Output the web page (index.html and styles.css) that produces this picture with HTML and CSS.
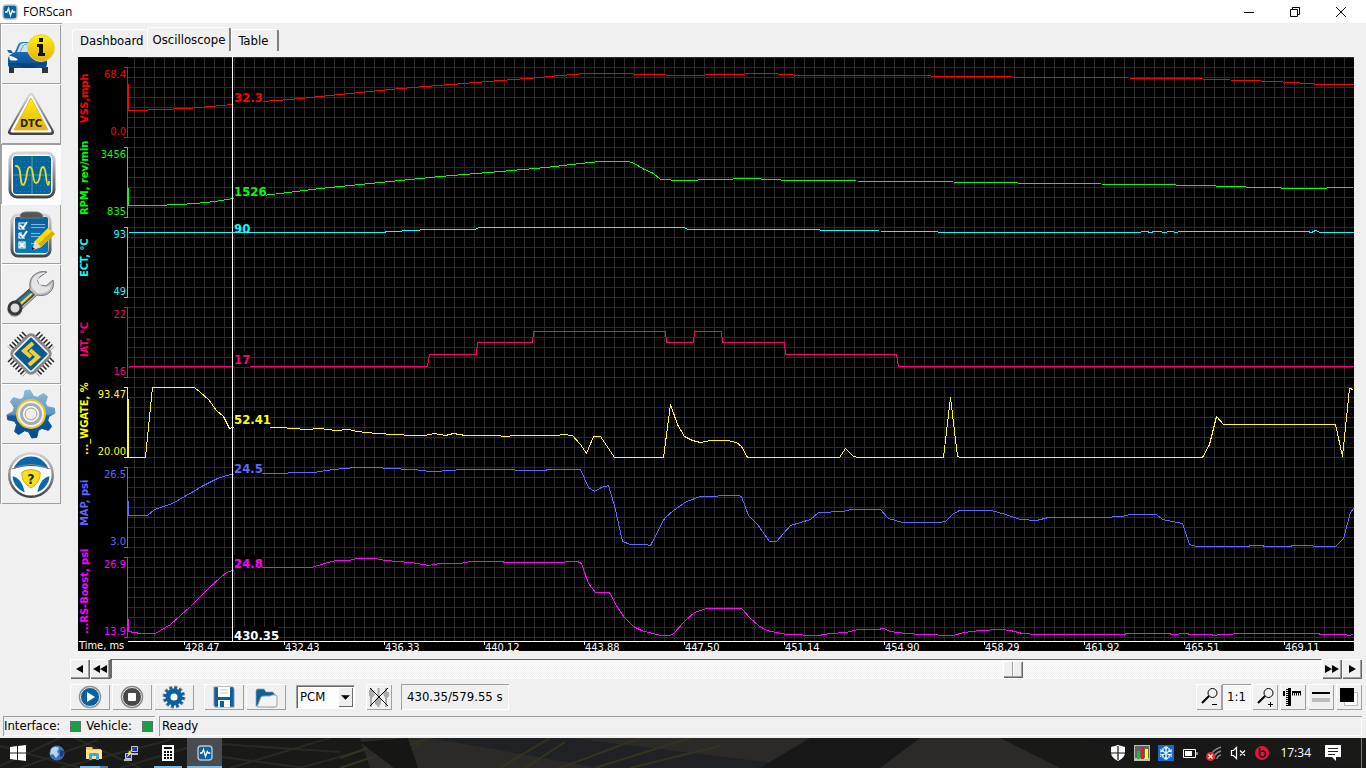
FILE: index.html
```html
<!DOCTYPE html>
<html lang="en">
<head>
<meta charset="utf-8">
<title>FORScan</title>
<link rel="stylesheet" href="styles.css">
</head>
<body>
<svg class="defs" width="0" height="0" aria-hidden="true">
  <defs>
    <linearGradient id="blue" x1="0" y1="0" x2="0" y2="1"><stop offset="0" stop-color="#0a5f9e"/><stop offset="1" stop-color="#0a7cb8"/></linearGradient>
    <linearGradient id="steel" x1="0" y1="0" x2="0" y2="1"><stop offset="0" stop-color="#d4d4d4"/><stop offset="1" stop-color="#444"/></linearGradient>
    <linearGradient id="gold" x1="0" y1="0" x2="0" y2="1"><stop offset="0" stop-color="#fff200"/><stop offset="1" stop-color="#e0b020"/></linearGradient>
    <linearGradient id="cog" x1="0" y1="0" x2="0" y2="1"><stop offset="0" stop-color="#8fb9da"/><stop offset=".5" stop-color="#5c97c4"/><stop offset=".55" stop-color="#13599b"/><stop offset="1" stop-color="#0a4c8c"/></linearGradient>
    <linearGradient id="car" x1="0" y1="0" x2="0" y2="1"><stop offset="0" stop-color="#2a7fc0"/><stop offset="1" stop-color="#064a8c"/></linearGradient>
    <pattern id="grid" x="134" y="57" width="10" height="10" patternUnits="userSpaceOnUse"><path d="M0 0H10V1H1V10H0Z" fill="#2c2c2c"/></pattern>
    <symbol id="logo" viewBox="0 0 16 16"><rect x="1" y="1" width="14" height="14" rx="3" fill="#0b629f" stroke="#b8c4cc" stroke-width="1.4"/><path d="M3 8h2l1.500-3.500 2 7 1.800-5 1 1.500h2" fill="none" stroke="#fff" stroke-width="1.300"/></symbol>
  </defs>
</svg>

<header class="titlebar">
  <svg class="app-logo" aria-hidden="true"><use href="#logo"/></svg>
  <h1 class="app-name">FORScan</h1>
  <div class="window-controls">
    <button type="button" aria-label="Minimize"><svg viewBox="0 0 10 10"><path d="M0 5.500h10" stroke="#000"/></svg></button>
    <button type="button" aria-label="Restore"><svg viewBox="0 0 10 10"><path d="M.5 2.500h7v7h-7zM2.500 2.500v-2h7v7h-2" fill="none" stroke="#000"/></svg></button>
    <button type="button" aria-label="Close"><svg viewBox="0 0 10 10"><path d="M0 0L10 10M10 0L0 10" stroke="#000"/></svg></button>
  </div>
</header>

<main class="workspace">
  <nav class="sidebar" aria-label="Sections">
    <button type="button" aria-label="Vehicle information">
      <svg viewBox="1 0 60 60">
        <path d="M9 43h5v6h-5zM42 43h6v6h-6z" fill="#30343a"/>
        <path d="M15 28l3-7q1-3 5-3h16q4 0 6 8l2 4v9q0 5-3 5H11q-3 0-3-4v-5q0-4 7-7z" fill="url(#car)"/>
        <path d="M17 28l3-7q1-2 4-2h10l1 9z" fill="#cfe2ef"/><path d="M20 28l3-6q1-2 4-2" fill="none" stroke="#5f9dc8"/><path d="M7 26h4l2 3h-4z" fill="#1b69a8"/>
        <path d="M9 32q5 0 9 4-4 1-8 0z" fill="#fff"/><path d="M9 40h37" stroke="#073b6c"/><path d="M20 41h18l-3 3H23z" fill="#084077"/>
        <circle cx="41" cy="24" r="13.500" fill="url(#gold)" stroke="#e6d45a"/><path d="M38 20h5v9h2v3h-7v-3h1v-6h-2v-3zM39 14h4v4h-4z" fill="#111"/>
      </svg></button>
    <button type="button" aria-label="DTC">
      <svg viewBox="1 0 60 60">
        <path d="M31 12L11 48h40z" fill="none" stroke="url(#steel)" stroke-width="6" stroke-linejoin="round"/>
        <path d="M31 13L12 47h38z" fill="#fff" stroke="#fff" stroke-width="3" stroke-linejoin="round"/>
        <path d="M31 14L14 46h34z" fill="url(#gold)" stroke="#e3b92a" stroke-width="1" stroke-linejoin="round"/>
        <text x="31" y="43" class="icon-text dtc">DTC</text>
      </svg></button>
    <button type="button" class="current" aria-label="Oscilloscope">
      <svg viewBox="1 0 60 60">
        <rect x="10" y="9" width="44" height="44" rx="7" fill="#fff" stroke="url(#steel)" stroke-width="3"/>
        <rect x="13" y="12" width="38" height="38" rx="3" fill="#066699"/>
        <path d="M16 17.500h33M16 23.500h33M16 35.500h33M16 41.500h33M16 47.500h33" stroke="#2689a0" stroke-dasharray="1 3"/>
        <path d="M13 31h38M32 12v38" stroke="#4b9b87" stroke-width="1.200"/>
        <path d="M15 22q4-1 5 6c1 8 1 13 3 13s3-5 4-12q1-6 3-6t3 8q1 8 3 8h0q3 0 4-8 1-8 3-8 2 0 3 9t2 9 1-4" fill="none" stroke="#e9dc3a" stroke-width="1.800"/>
      </svg></button>
    <button type="button" aria-label="Tests">
      <svg viewBox="1 0 60 60">
        <rect x="12" y="11" width="38" height="41" rx="6" fill="#fff" stroke="url(#steel)" stroke-width="3"/>
        <rect x="15" y="13" width="33" height="36" rx="2" fill="url(#blue)"/>
        <path d="M20 14q0-4 2-5 2-1 4-1h10q2 0 4 1 3 1 3 5z" fill="#555" stroke="#777"/>
        <g fill="none" stroke="#fff" stroke-width="1.200"><path d="M25 19h-6v6h6M19 29v5h6M19 29h3M19 38h6v6h-6z"/><path d="M20 21l3 3 4-6M20 30l3 3 4-6M20 39l4 4M24 39l-4 4" stroke-width="2"/></g>
        <path d="M31 20.500h14M31 23.500h14M31 29.500h9M31 32.500h9M31 39.500h3" stroke="#84b7d5"/>
        <path d="M48 24l7 6-14 13-8 3 1-8z" fill="#ffdd00"/><path d="M55 30L41 43l-3-3 14-13z" fill="#dcaa00"/><path d="M35 37l6 6-8 3z" fill="#ddd"/><path d="M32 43l3 2-3 1z"/>
      </svg></button>
    <button type="button" aria-label="Service">
      <svg viewBox="1 0 60 60">
        <path d="M47 8q-8-2-14 4-4 4-3 12L14 40q-7 1-6 7 2 6 8 5 5-1 5-6l16-15q8 2 13-3 5-5 3-12l-7 6-7-1-2-6z" fill="#b9bdc1" stroke="#777" stroke-width="1"/>
        <path d="M46 9q-7-1-12 4-4 5-2 11l5 5q8 1 12-3l3-6q-5 5-12 1-6-4 1-10z" fill="#e2e4e6"/>
        <path d="M29 25l6 6-17 15-7-6z" fill="#474b50"/><path d="M29 27l2 2-16 14-2-2z" fill="#1a7bb5"/><path d="M31 29l2 1-16 15-2-2z" fill="#f5dc1c"/>
        <circle cx="15" cy="44" r="6" fill="#ddd" stroke="#36393c" stroke-width="3"/>
      </svg></button>
    <button type="button" aria-label="Configuration and programming">
      <svg viewBox="1 0 60 60">
        <path d="M25 10L10 25M37 10L52 25M10 35L25 50M52 35L37 50" stroke="#222" stroke-width="7" stroke-dasharray="1.500 2"/>
        <rect x="16" y="15" width="30" height="30" rx="5" transform="rotate(45 31 30)" fill="#fff" stroke="#8a8a8a" stroke-width="3"/>
        <rect x="19" y="18" width="24" height="24" rx="1" transform="rotate(45 31 30)" fill="#085b91"/>
        <path d="M33 19L24 27L31 33M30 26L38 33L29 41" fill="none" stroke="#f2cf38" stroke-width="4"/>
      </svg></button>
    <button type="button" aria-label="Settings">
      <svg viewBox="1 0 60 60">
        <path d="M25 6.700L30 6 33.500 12.200 37.400 13.200 43.400 9.400 47.400 12.500 45.400 19.200 47.500 22.700 54.300 24.200 55 29.200 48.800 32.500 47.800 36.400 51.600 42.400 48.500 46.400 41.800 44.400 38.300 46.500 36.800 53.300 31.800 54 28.500 47.800 24.600 46.800 18.600 50.600 14.600 47.500 16.600 40.800 14.500 37.300 7.700 35.800 7 30.800 13.200 27.500 14.200 23.600 10.400 17.600 13.500 13.600 20.200 15.600 23.700 13.500z" fill="url(#cog)" stroke="url(#cog)" stroke-linejoin="round"/>
        <circle cx="31" cy="30" r="14" fill="#eef0f0" stroke="#e4c62a" stroke-width="2"/><circle cx="31" cy="30" r="11" fill="#aaa"/><circle cx="31" cy="30" r="7" fill="#eee" stroke="#fff" stroke-width="2"/><circle cx="31" cy="30" r="6" fill="#efefef" stroke="#999"/>
      </svg></button>
    <button type="button" aria-label="Help">
      <svg viewBox="1 0 60 60">
        <circle cx="31" cy="31" r="21.500" fill="#0d68a8" stroke="url(#steel)" stroke-width="3"/><circle cx="31" cy="31" r="19.500" fill="none" stroke="#fff" stroke-width="2"/>
        <path d="M11 26q20-8 40 0v6q-11 1-14 18H25Q22 33 11 32z" fill="#fff"/>
        <path d="M12 25q19-9 38 0" fill="none" stroke="#888"/>
        <path d="M22 28q9-5 18 0 1 8-5 13l-4 3-4-3q-6-5-5-13z" fill="#f6df1c" stroke="#cda91a"/>
        <text x="31" y="40" class="icon-text question">?</text>
      </svg></button>
  </nav>

  <section class="content">
    <div class="tabs" role="tablist">
      <button type="button" role="tab" aria-selected="false">Dashboard</button>
      <button type="button" role="tab" aria-selected="true">Oscilloscope</button>
      <button type="button" role="tab" aria-selected="false">Table</button>
    </div>

    <div class="chart">
      <svg viewBox="78 57 1276 594" role="img" aria-label="Oscilloscope traces">
        <rect x="128" y="57" width="1226" height="584" fill="url(#grid)"/>
        <g class="traces" transform="translate(.5 .5)">
          <g class="vss"><path d="M123 67h4v70h-4M128 83V110"/><path d="M128 110L137 110 158 109 187 108 210 106 232 104 262 101 290 99 340 94 370 91 400 88 450 84 500 80 540 77 560 75 585 73 625 73 640 74 690 75 720 74 770 73 800 75 900 75 960 76 1060 77 1195 78 1209 79 1250 80 1293 82 1320 84 1353 84"/></g>
          <g class="rpm"><path d="M123 147h4v70h-4M128 187V205"/><path d="M128 205L154 205 180 204 194 203 215 201 232 198 271 194 320 188 370 183 400 180 440 176 500 171 545 167 580 163 600 161 628 161 634 163 642 168 653 173 660 179 680 180 750 178 790 180 920 181 1050 183 1150 184 1200 185 1260 187 1300 188 1353 187"/></g>
          <g class="ect"><path d="M123 227h4v70h-4"/><path d="M128 232H384L386 231 418 230 421 229H475L478 227H684L687 229H818L821 230 936 231 939 232H1139L1142 231 1146 231 1150 232 1154 231 1158 231 1164 232 1170 231 1176 232 1179 231H1307L1311 232 1315 230 1320 232H1353"/></g>
          <g class="iat"><path d="M123 307h4v70h-4"/><path d="M128 366H427L429 354H476L477 342H532L533 331H665L666 342H693L694 331H721L722 342H784L785 354H896L898 366H1353"/></g>
          <g class="wgate"><path d="M123 387h4v70h-4M128 398V457"/><path d="M128 457L145 457 152 387 194 387 200 392 208 399 216 410 223 416 229 428 232 427 280 427 306 429 320 428 335 430 349 429 356 431 376 433 413 435 424 435 434 433 445 435 453 433 465 435 495 435 505 436 515 435 557 435 562 434 572 435 580 444 586 453 593 436 600 436 614 457 663 457 670 404 677 424 684 436 692 440 700 442 710 440 727 440 736 442 741 446 747 457 839 457 845 448 853 456 858 457 943 457 950 397 957 456 960 457 1202 457 1209 444 1216 416 1223 424 1335 424 1342 456 1349 388 1353 389"/></g>
          <g class="map"><path d="M123 467h4v80h-4M128 500V515"/><path d="M128 515L147 515 154 509 172 503 186 495 203 485 217 478 226 475 232 474 263 473 313 472 333 469 355 467 378 467 387 468 413 469 430 471 453 470 458 469 514 469 515 470 545 470 547 469 580 469 588 487 594 491 601 487 608 485 614 505 622 541 630 544 645 544 650 545 664 518 673 510 686 501 700 496 717 496 718 495 738 495 741 496 748 515 757 524 769 541 776 541 790 525 810 519 818 512 843 511 850 509 880 509 888 518 902 522 939 522 945 521 952 514 959 510 991 510 1005 514 1020 519 1036 520 1048 517 1103 517 1121 516 1130 514 1156 514 1162 519 1182 523 1189 544 1196 546 1248 546 1250 545 1262 545 1264 546 1290 546 1292 545 1312 545 1313 546 1335 546 1343 538 1350 512 1353 508"/></g>
          <g class="boost"><path d="M123 557h4v80h-4M128 618V631"/><path d="M128 631L140 633 155 633 170 624 190 606 208 588 220 577 226 572 232 570 263 567 311 567 324 563 335 560 349 560 356 558 375 558 385 560 410 562 428 565 440 563 460 563 470 561 502 561 504 562 563 562 566 561 577 561 581 563 588 583 595 592 609 592 617 607 624 617 633 626 641 630 660 635 670 635 673 633 684 621 694 612 706 608 741 608 750 618 758 625 766 630 776 632 786 634 818 635 830 633 845 632 858 629 877 629 883 628 890 631 905 633 922 634 953 635 963 632 980 630 1000 629 1010 630 1022 633 1036 634 1124 634 1126 633 1169 633 1171 634 1187 633 1189 634 1211 634 1213 635 1220 634 1245 633 1318 633 1320 634 1345 634 1348 635 1353 634"/></g>
        </g>
        <g class="masks"><path d="M234 90h29v16h-29zM234 183h32v16h-32zM234 220h16v12h-16zM234 351h16v16h-16zM234 411h36v17h-36zM234 460h28v16h-28zM234 555h28v16h-28zM234 627h44v14h-44z"/></g>
        <path d="M232 57h1v584h-1zM128 641h1226v1H128zM184 641h1v4h-1zM284 641h1v4h-1zM384 641h1v4h-1zM484 641h1v4h-1zM584 641h1v4h-1zM684 641h1v4h-1zM784 641h1v4h-1zM884 641h1v4h-1zM984 641h1v4h-1zM1084 641h1v4h-1zM1184 641h1v4h-1zM1284 641h1v4h-1z" fill="#fff" shape-rendering="crispEdges"/>
        <g class="scale-text">
          <g class="vss"><text x="126" y="78">68.4</text><text x="126" y="135">0.0</text></g>
          <g class="rpm"><text x="126" y="158">3456</text><text x="126" y="215">835</text></g>
          <g class="ect"><text x="126" y="238">93</text><text x="126" y="295">49</text></g>
          <g class="iat"><text x="126" y="318">22</text><text x="126" y="375">16</text></g>
          <g class="wgate"><text x="126" y="398">93.47</text><text x="126" y="455">20.00</text></g>
          <g class="map"><text x="126" y="478">26.5</text><text x="126" y="545">3.0</text></g>
          <g class="boost"><text x="126" y="568">26.9</text><text x="126" y="635">13.9</text></g>
        </g>
        <g class="names">
          <text class="vss" transform="translate(88 123) rotate(-90)">VSS,mph</text>
          <text class="rpm" transform="translate(88 215) rotate(-90)">RPM, rev/min</text>
          <text class="ect" transform="translate(88 277) rotate(-90)">ECT, °C</text>
          <text class="iat" transform="translate(88 357) rotate(-90)">IAT, °C</text>
          <text class="wgate" transform="translate(88 455) rotate(-90)">..._WGATE, %</text>
          <text class="map" transform="translate(88 526) rotate(-90)">MAP, psi</text>
          <text class="boost" transform="translate(88 634) rotate(-90)">...RS-Boost, psi</text>
        </g>
        <g class="readings">
          <text class="vss" x="234" y="102">32.3</text><text class="rpm" x="234" y="196">1526</text><text class="ect" x="234" y="233">90</text><text class="iat" x="234" y="364">17</text>
          <text class="wgate" x="234" y="424">52.41</text><text class="map" x="234" y="473">24.5</text><text class="boost" x="234" y="568">24.8</text><text class="time" x="234" y="640">430.35</text>
        </g>
        <g class="time-text">
          <text x="79" y="649">Time, ms</text><text x="185" y="651">428.47</text><text x="285" y="651">432.43</text><text x="385" y="651">436.33</text><text x="485" y="651">440.12</text><text x="585" y="651">443.88</text><text x="685" y="651">447.50</text><text x="785" y="651">451.14</text><text x="885" y="651">454.90</text><text x="985" y="651">458.29</text><text x="1085" y="651">461.92</text><text x="1185" y="651">465.51</text><text x="1285" y="651">469.11</text>
        </g>
      </svg>
    </div>

    <div class="scroller">
      <button type="button" aria-label="Step back"><svg viewBox="0 0 16 8"><path d="M11 0v8L4 4z"/></svg></button>
      <button type="button" aria-label="Page back"><svg viewBox="0 0 16 8"><path d="M8 0v8L1 4zM15 0v8L8 4z"/></svg></button>
      <input type="range" min="0" max="1000" value="749" aria-label="Time position">
      <button type="button" aria-label="Page forward"><svg viewBox="0 0 16 8"><path d="M1 0v8l7-4zM8 0v8l7-4z"/></svg></button>
      <button type="button" aria-label="Step forward"><svg viewBox="0 0 16 8"><path d="M5 0v8l7-4z"/></svg></button>
    </div>

    <div class="toolbar">
      <div class="tool-group">
        <button type="button" class="tool wide" aria-label="Play"><svg viewBox="0 0 24 24"><circle cx="12" cy="12" r="10.500" fill="#0b609e" stroke="#8b9299" stroke-width="1.500"/><circle cx="12" cy="12" r="9.500" fill="none" stroke="#dfe8ee"/><path d="M9 7l8 5-8 5z" fill="#fff"/></svg></button>
        <button type="button" class="tool wide" aria-label="Stop"><svg viewBox="0 0 24 24"><circle cx="12" cy="12" r="10.500" fill="#484848" stroke="#888" stroke-width="1.500"/><circle cx="12" cy="12" r="9.500" fill="none" stroke="#e4e4e4"/><rect x="8" y="8" width="8" height="8" rx="1" fill="#fff"/></svg></button>
        <button type="button" class="tool wide" aria-label="Options"><svg viewBox="0 0 24 24"><circle cx="12" cy="12" r="9.500" fill="none" stroke="#8d969e" stroke-width="4" stroke-dasharray="3 1.975"/><circle cx="12" cy="12" r="8.500" fill="none" stroke="#0b609e" stroke-width="4" stroke-dasharray="2.450 2"/><circle cx="12" cy="12" r="6" fill="#fff" stroke="#0b609e" stroke-width="5"/></svg></button>
      </div>
      <div class="tool-group files">
        <button type="button" class="tool wide" aria-label="Save"><svg viewBox="0 0 24 24"><path d="M2 2h19l1 2v18H3l-1-2z" fill="#0b609e" stroke="#8b9299"/><path d="M6 2h12v10H6z" fill="#fff"/><path d="M8 5h8M8 8h8" stroke="#c5ccd1"/><path d="M6 15h12v7H6z" fill="#fff"/><path d="M8 16h4v6H8z" fill="#0b609e"/></svg></button>
        <button type="button" class="tool wide" aria-label="Open"><svg viewBox="0 0 24 24"><path d="M2 21V6q0-2 2-2h6l2 3h7l2 3v12z" fill="#0b609e" stroke="#98a1a8" stroke-width=".700"/><path d="M3 22l4-10q1-1 3-1h6l2-1h4l1 1v9q0 2-2 2z" fill="#f4f4f4" stroke="#9ba1a6"/></svg></button>
      </div>
      <div class="module">
        <select aria-label="Module"><option>PCM</option></select>
        <span class="module-arrow" aria-hidden="true"><svg viewBox="0 0 10 5"><path d="M0 0h10L5 5z"/></svg></span>
      </div>
      <button type="button" class="tool signals" aria-label="Clear traces"><svg viewBox="0 0 22 22"><path d="M3 2v7M10.500 2v8M18 2v8M3 9v12M10.500 14v7M18 9v12" stroke="#aaa" stroke-width="2"/><path d="M1 4h4l2 5-3 3-3-2zM10 10l3 4v4l-3 2-3-2v-3zM15 6h6v4l-3 3-2-3z" fill="#aaa"/><path d="M2 2l18 18M20 2L2 20" stroke="#000"/></svg></button>
      <output class="position">430.35/579.55 s</output>
      <div class="tool-group view">
        <button type="button" class="tool" aria-label="Zoom out"><svg viewBox="0 0 22 22"><circle cx="14.500" cy="7" r="4.500" fill="none" stroke="#000"/><path d="M11 10l-7 7" stroke="#000" stroke-width="2"/><path d="M14 18.500h5" stroke="#000"/></svg></button>
        <button type="button" class="tool ratio" aria-pressed="true">1:1</button>
        <button type="button" class="tool" aria-label="Zoom in"><svg viewBox="0 0 22 22"><circle cx="14.500" cy="7" r="4.500" fill="none" stroke="#000"/><path d="M11 10l-7 7" stroke="#000" stroke-width="2"/><path d="M14 18.500h5M16.500 16v5" stroke="#000"/></svg></button>
        <button type="button" class="tool" aria-label="Rulers"><svg viewBox="0 0 22 22"><path d="M6 2h3v18H6zM1 5h2v5H1z"/><path d="M5 3v17" stroke="#000" stroke-width="2" stroke-dasharray="1 1"/><path d="M10 6h9" stroke="#000" stroke-width="2"/><path d="M10 7.500h10" stroke="#000" stroke-width="4" stroke-dasharray="1 1"/></svg></button>
        <button type="button" class="tool" aria-label="Line width"><svg viewBox="0 0 22 22"><path d="M2 6h18v2H2z"/><path d="M2 12h18v4H2z" fill="#bbb"/></svg></button>
        <button type="button" class="tool" aria-label="Background colour"><svg viewBox="0 0 22 22"><path d="M6.500 6.500h13v13h-13z" fill="#fff" stroke="#bbb"/><path d="M2 2h14v14H2z"/></svg></button>
      </div>
    </div>
  </section>
</main>

<footer class="statusbar">
  <div class="panel links"><span>Interface:</span><i class="lamp"></i><span>Vehicle:</span><i class="lamp"></i></div>
  <div class="panel state">Ready</div>
</footer>

<div class="taskbar">
  <svg class="wallpaper" viewBox="0 0 1366 30" preserveAspectRatio="none" aria-hidden="true">
    <path d="M0 0h1366v30H0z" fill="#191a18"/><path d="M360 0h640l60 30H370z" fill="#2c2a29"/><path d="M430 0h140l180 22 60 8H600z" fill="#202124"/><path d="M810 0h110l-40 30H760z" fill="#171717"/><path d="M1080 0h90l110 18 86 12h-180z" fill="#171717"/>
    <path d="M0 28L60 0M20 30L98 2M60 30L170 2M120 30L220 0M0 8L80 30M75 0l65 30M215 18l90 12M220 6l120 8M230 30L330 0M300 30L400 2" stroke="#272923" stroke-width="2"/>
    <path d="M340 20L395 0M340 30L430 0M385 30L420 6M500 30L550 0M525 30L565 4M560 30L640 0M595 30L690 0M630 30L720 8" stroke="#33331f" stroke-width="2"/>
    <path d="M360 4l34 26h24L408 0z" fill="#161615"/>
  </svg>
  <nav class="apps" aria-label="Taskbar">
    <button type="button" class="start" aria-label="Start"><svg viewBox="0 0 16 16"><path d="M0 2l7-1v6.500H0zM8 1l8-1v7.500H8zM0 8.500h7V15l-7-1zM8 8.500h8V16l-8-1z" fill="#fff"/></svg></button>
    <button type="button" aria-label="Browser"><svg viewBox="0 0 16 16"><circle cx="8" cy="8" r="7.500" fill="#3c70ba"/><path d="M2 4q4-4 8-1l-2 4 2 2-3 4-3-4-3 1z" fill="#b9d2ef"/><path d="M11 5l4 1-1 5-3 1z" fill="#1c3f81"/></svg></button>
    <button type="button" class="running stacked" aria-label="File Explorer"><svg viewBox="0 0 16 16"><path d="M0 2h6l1 2h8v10H0z" fill="#f5c951"/><path d="M0 5h16v9H0z" fill="#ffe391"/><path d="M3 15V10q0-2 2-2h6q2 0 2 2v5h-3v-4H6v4z" fill="#3ba8e0"/></svg></button>
    <button type="button" aria-label="PuTTY"><svg viewBox="0 0 16 16"><path d="M8.500 1.500h6v5h-6zM2.500 8.500h6v5h-6z" fill="#2328d0" stroke="#ccc"/><path d="M7 8h8v2H9zM1 14h8v2H1z" fill="#bbb"/><path d="M12 3L7 7l2 1-6 5 3-5-1-1z" fill="#ff0"/></svg></button>
    <button type="button" class="running" aria-label="Calculator"><svg viewBox="0 0 16 16"><path d="M2 0h12v16H2z" fill="#fff"/><path d="M4 2h8v2H4zM4 6h2v2H4zM7 6h2v2H7zM10 6h2v2h-2zM4 9h2v2H4zM7 9h2v2H7zM10 9h2v2h-2zM4 12h2v2H4zM7 12h2v2H7zM10 12h2v2h-2z" fill="#111"/></svg></button>
    <button type="button" class="running active" aria-label="FORScan"><svg viewBox="0 0 16 16"><use href="#logo"/></svg></button>
  </nav>
  <div class="tray">
    <button type="button" aria-label="Security"><svg viewBox="0 0 16 16"><path d="M8 0l7 2v5q0 6-7 9-7-3-7-9V2z" fill="#fff"/><path d="M8 1v14M1 8h14" stroke="#151515" stroke-width="1.200"/></svg></button>
    <button type="button" aria-label="Monitor"><svg viewBox="0 0 16 16"><path d="M0 0h16v16H0z" fill="#bfc1b5"/><path d="M1 1h14v12H1z" fill="#65675f"/><path d="M3 6h3v8H3z" fill="#0c3"/><path d="M7 2h3v12H7z" fill="#f01818"/><path d="M11 4h3v10h-3z" fill="#ff2"/></svg></button>
    <button type="button" aria-label="Temperature"><svg viewBox="0 0 16 16"><path d="M0 0h16v16H0z" fill="#1768c8"/><path d="M8 1v14M2 4.500l12 7M14 4.500l-12 7M6 2l2 2 2-2M6 14l2-2 2 2M2 7l3-1V3M14 7l-3-1V3M2 9l3 1v3M14 9l-3 1v3" fill="none" stroke="#e3f6ff" stroke-width="1.300"/></svg></button>
    <button type="button" aria-label="Battery"><svg viewBox="0 0 16 16"><path d="M1.500 4.500h12v8h-12zM15 7v3" fill="none" stroke="#fff"/><path d="M3 6h7v5H3z" fill="#fff"/></svg></button>
    <button type="button" aria-label="Network"><svg viewBox="0 0 16 16"><path d="M5 13q0-8 10-11M8 14q0-6 7-8M11 14q0-3 4-4" fill="none" stroke="#888" stroke-width="1.400"/><circle cx="4.500" cy="11.500" r="4.500" fill="#e32828"/><path d="M2.500 9.500l4 4M6.500 9.500l-4 4" stroke="#fff" stroke-width="1.300"/></svg></button>
    <button type="button" aria-label="Volume muted"><svg viewBox="0 0 16 16"><path d="M1.500 5.500h2l3-3v11l-3-3h-2zM10 5.500l5 5M15 5.500l-5 5" fill="none" stroke="#fff" stroke-width="1.200"/></svg></button>
    <button type="button" aria-label="Audio"><svg viewBox="0 0 16 16"><circle cx="8" cy="8" r="7" fill="#df173c"/><circle cx="8.500" cy="9" r="3" fill="none" stroke="#2b1218" stroke-width="1.600"/><path d="M5.500 3v6" stroke="#2b1218" stroke-width="1.600"/></svg></button>
    <time class="clock" datetime="17:34">17:34</time>
    <button type="button" class="notices" aria-label="Notifications"><svg viewBox="0 0 16 16"><path d="M0 0h16v12h-5v4l-4-4H0z" fill="#fff"/><path d="M3 3.500h10M3 6.500h10M3 9.500h7" stroke="#222"/></svg></button>
  </div>
</div>
</body>
</html>
```
FILE: styles.css
```css
* { box-sizing: border-box; }

body {
  margin: 0;
  height: 100vh;
  display: flex;
  flex-direction: column;
  overflow: hidden;
  background: #f0f0f0;
  color: #000;
  font: 12px/16px "DejaVu Sans Condensed", "DejaVu Sans", sans-serif;
}

button, select, input, output { font: inherit; color: inherit; }
button { border: 0; padding: 0; background: none; }
svg { display: block; }
.defs { position: absolute; }

/* Title bar */
.titlebar { display: flex; align-items: center; height: 23px; flex: none; background: #fff; padding-left: 2px; }
.app-logo { width: 16px; height: 16px; }
.app-name { margin: 0 auto 0 5px; font: 12px/16px "Open Sans", "Noto Sans", sans-serif; }
.window-controls { display: flex; }
.window-controls button { width: 46px; height: 20px; display: grid; place-items: center; }
.window-controls svg { width: 10px; height: 10px; }
.window-controls button:last-child { margin-right: 2px; }

/* Work area */
.workspace { flex: 1; min-height: 0; display: flex; }
.sidebar { width: 62px; flex: none; align-self: flex-start; border-top: 1px solid #a0a0a0; border-left: 1px solid #a0a0a0; }
.sidebar button { display: block; width: 60px; height: 60px; box-shadow: inset 1px 1px #fff, inset -1px -1px #a0a0a0; }
.sidebar button.current { background: #fff; box-shadow: inset 1px 1px #a0a0a0; }
.sidebar svg { width: 60px; height: 60px; }
.icon-text { text-anchor: middle; font-family: "DejaVu Sans Condensed", sans-serif; font-weight: bold; fill: #2b2510; }
.dtc { font-size: 11px; }
.question { font-size: 14px; }

.content { flex: 1; min-width: 0; display: flex; flex-direction: column; padding: 4px 4px 0 8px; }

.tabs { display: flex; height: 30px; flex: none; padding-left: 2px; align-items: flex-start; font-size: 13px; }
.tabs button { margin-top: 2px; height: 22px; padding: 1px 4px 0 7px; border-top: 1px solid #fff; border-left: 1px solid #fff; border-radius: 3px 3px 0 0; }
.tabs button[aria-selected="true"] { margin-top: 0; height: 24px; padding: 0 4px; border-right: 2px solid #808080; }
.tabs button:last-child { border-right: 2px solid #808080; padding: 1px 9px 0 6px; }

/* Plot */
.chart { flex: 1; min-height: 0; margin: 0 8px; background: #000; }
.chart svg { width: 100%; height: 100%; overflow: visible; }
.vss { --c: #f00; }
.rpm { --c: #0f0; }
.ect { --c: #0ff; }
.iat { --c: #ff0074; }
.wgate { --c: #ff0; }
.map { --c: #6464ff; }
.boost { --c: #f0f; }
.time { --c: #fff; }
.traces path { fill: none; stroke: var(--c); stroke-width: 1; shape-rendering: crispEdges; }
.chart text { fill: var(--c); }
.scale-text { font-size: 11px; text-anchor: end; }
.names { font-size: 11px; font-weight: bold; }
.readings { font-size: 13px; font-weight: bold; }
.time-text { --c: #fff; font-size: 11px; }

/* Time scroller */
.scroller { display: flex; flex: none; height: 20px; margin-top: 8px; }
.scroller button { width: 20px; display: grid; place-items: center; box-shadow: inset 1px 1px #fff, inset -1px -1px #696969, inset -2px -2px #a0a0a0; }
.scroller button svg { width: 16px; height: 8px; }
.scroller input {
  flex: 1; min-width: 0; margin: 0; height: 20px; appearance: none;
  border: 1px solid #fff; border-top-color: #696969; border-left: 2px solid #696969;
  background: repeating-conic-gradient(#fff 0 25%, #f0f0f0 0 50%) 0 0 / 2px 2px;
}
.scroller input::-webkit-slider-thumb {
  appearance: none; width: 20px; height: 17px;
  background: linear-gradient(90deg, transparent 9px, #a0a0a0 9px 10px, #fff 10px 11px, transparent 11px) #f0f0f0;
  box-shadow: inset 1px 1px #fff, inset -1px -1px #696969, inset -2px -2px #a0a0a0;
}

/* Tool bar */
.toolbar { display: flex; flex: none; height: 26px; margin: 5px 0 6px; font-size: 13px; }
.tool-group { display: flex; gap: 2px; }
.files { margin-left: 10px; }
.tool { width: 26px; height: 26px; display: grid; place-items: center; box-shadow: inset 1px 1px #fff, inset -1px -1px #a0a0a0; }
.tool svg { width: 22px; height: 22px; }
.tool.wide { width: 40px; }
.tool.wide svg { width: 24px; height: 24px; }
.tool.ratio { width: 29px; margin: 0 -1px 0 -2px; background: #f7f7f7; box-shadow: inset 1px 1px #a0a0a0, inset -1px -1px #fff; }
.module { position: relative; margin: 1px 11px 0 10px; width: 59px; height: 24px; }
.module select {
  width: 100%; height: 100%; padding: 0 0 0 3px; appearance: none; border-radius: 0; background: #fff;
  border: 1px solid #fff; border-top-color: #a0a0a0; border-left-color: #a0a0a0; box-shadow: inset 1px 1px #696969;
}
.module-arrow {
  position: absolute; top: 2px; right: 2px; width: 15px; height: 20px; display: grid; place-items: center; pointer-events: none;
  background: #f0f0f0; box-shadow: inset 1px 1px #fff, inset -1px -1px #696969;
}
.module-arrow svg { width: 9px; height: 5px; }
.position { margin-left: 9px; padding: 0 6px; line-height: 26px; box-shadow: inset 1px 1px #a0a0a0, inset -1px -1px #fff; }
.view { margin-left: auto; }

/* Status bar */
.statusbar { display: flex; flex: none; gap: 4px; height: 22px; padding: 0 4px 2px 3px; font-size: 13px; line-height: 20px; }
.panel { box-shadow: inset 1px 1px #a0a0a0, inset -1px -1px #fff; }
.links { display: flex; align-items: center; width: 152px; padding: 0 2px 0 1px; }
.links .lamp + span { margin-left: 5px; }
.lamp { width: 11px; height: 11px; margin-left: auto; background: #18a048; border: 1px solid #6c6c6c; }
.state { flex: 1; padding-left: 3px; }

/* Taskbar */
.taskbar { position: relative; display: flex; flex: none; height: 30px; justify-content: space-between; background: #191a18; color: #fff; }
.wallpaper { position: absolute; inset: 0; width: 100%; height: 100%; }
.apps, .tray { position: relative; display: flex; }
.apps { gap: 2px; }
.apps button { width: 35px; height: 30px; display: grid; place-items: center; }
.apps .start { margin-right: 2px; }
.apps svg { width: 16px; height: 16px; }
.running { background: linear-gradient(#76b9ed, #76b9ed) 50% 100% / 28px 2px no-repeat; }
.apps .stacked { background: linear-gradient(90deg, #76b9ed 20px, #4f7da2 20px) 50% 100% / 28px 2px no-repeat; }
.apps .active { background: linear-gradient(#76b9ed, #76b9ed) 0 100% / 100% 2px no-repeat #484c4e; }
.tray { align-items: center; padding-right: 4px; }
.tray button { width: 24px; height: 30px; display: grid; place-items: center; }
.tray svg { width: 16px; height: 16px; }
.clock { margin: 0 10px 0 6px; font: 12px/16px "Open Sans", "Noto Sans", sans-serif; }
.tray .notices { width: 41px; padding-right: 16px; border-right: 1px solid #777; }
```
